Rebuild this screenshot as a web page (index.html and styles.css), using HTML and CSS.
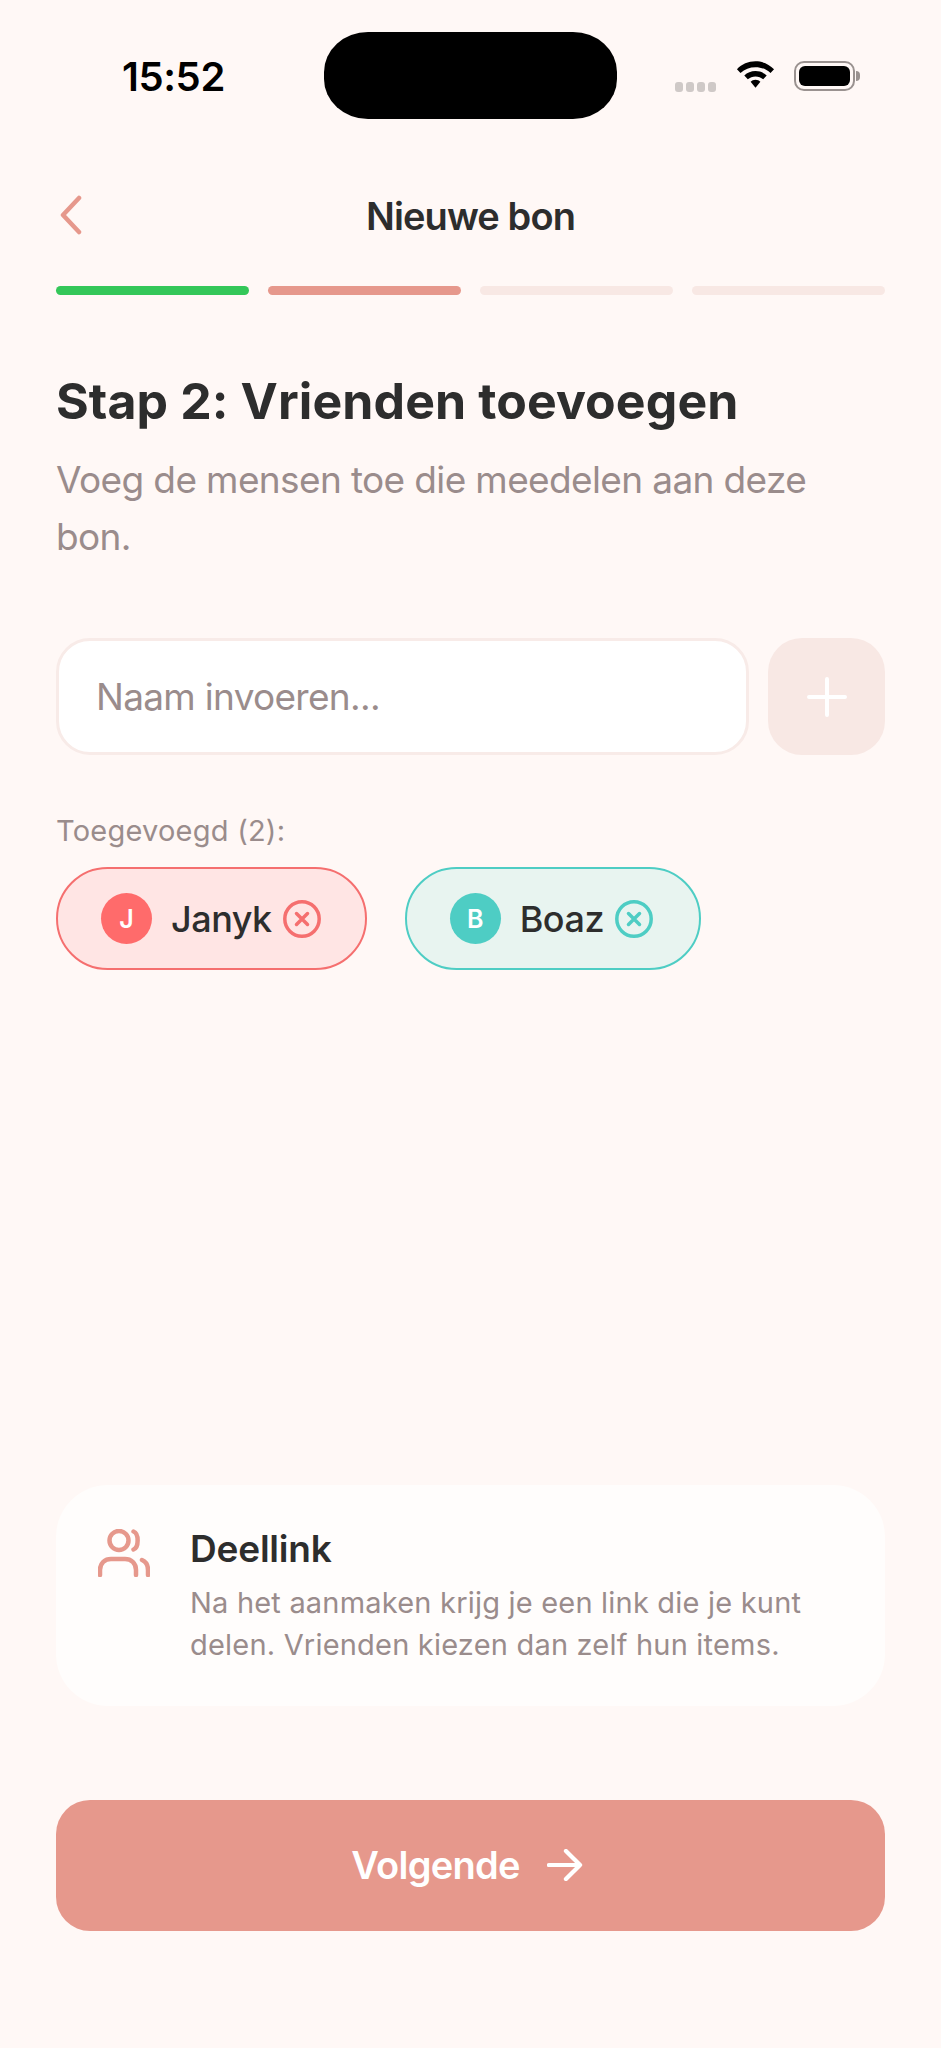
FILE: index.html
```html
<!DOCTYPE html>
<html lang="nl">
<head>
<meta charset="utf-8">
<title>Nieuwe bon</title>
<link rel="stylesheet" href="styles.css">
</head>
<body>
<main class="page">
  <div class="status">
    <span class="time">15:52</span>
    <div class="island"></div>
    <div class="status-icons">
      <div class="dots"><i></i><i></i><i></i><i></i></div>
      <svg class="wifi" viewBox="0 0 40 30"><path d="M20 2C12.5 2 6 5 1 10l3.6 4C9 10 14 8 20 8s11 2 15.4 6l3.600-4C34 5 27.500 2 20 2z"/><path d="M20 12c-4.500 0-8.500 1.700-11.500 4.500l3.600 4C14.200 18.500 17 17.500 20 17.500s5.800 1 7.900 3l3.600-4C28.500 13.700 24.500 12 20 12z"/><path d="M20 21c-2 0-3.800.8-5 2l5 6 5-6c-1.200-1.200-3-2-5-2z"/></svg>
      <div class="battery"><div class="battery-fill"></div></div>
      <div class="battery-cap"></div>
    </div>
  </div>

  <header class="nav">
    <svg class="back" viewBox="0 0 24 40"><path d="M20 3 4 20l16 17"/></svg>
    <h1 class="nav-title">Nieuwe bon</h1>
  </header>

  <div class="progress">
    <span class="bar done"></span>
    <span class="bar active"></span>
    <span class="bar"></span>
    <span class="bar"></span>
  </div>

  <h2 class="heading">Stap 2: Vrienden toevoegen</h2>
  <p class="sub">Voeg de mensen toe die meedelen aan deze bon.</p>

  <div class="add-row">
    <div class="input">Naam invoeren...</div>
    <div class="add-btn">
      <svg viewBox="0 0 40 40"><path d="M20 2v36M2 20h36"/></svg>
    </div>
  </div>

  <p class="label">Toegevoegd (2):</p>
  <div class="chips">
    <div class="chip chip-red">
      <span class="avatar">J</span>
      <span class="name">Janyk</span>
      <svg class="remove" viewBox="0 0 38 38"><circle cx="19" cy="19" r="17.200"/><path d="M13.500 13.500l11 11M24.500 13.500l-11 11"/></svg>
    </div>
    <div class="chip chip-teal">
      <span class="avatar">B</span>
      <span class="name">Boaz</span>
      <svg class="remove" viewBox="0 0 38 38"><circle cx="19" cy="19" r="17.200"/><path d="M13.500 13.500l11 11M24.500 13.500l-11 11"/></svg>
    </div>
  </div>

  <section class="card">
    <svg class="users" viewBox="0 0 52 48"><circle cx="21" cy="11.500" r="9.500"/><path d="M35.500 2.500c5.500 2 5.500 16 0 18"/><path d="M2 46v-5c0-7 5-11 11-11h14c6 0 11 4 11 11v5"/><path d="M44 31c3.500 1.500 6 5 6 10v5"/></svg>
    <div class="card-text">
      <h3 class="card-title">Deellink</h3>
      <p class="card-desc">Na het aanmaken krijg je een link die je kunt delen. Vrienden kiezen dan zelf hun items.</p>
    </div>
  </section>

  <button class="next" type="button">
    <span>Volgende</span>
    <svg viewBox="0 0 38 34"><path d="M2 17h33M20 2l15 15-15 15"/></svg>
  </button>
</main>
</body>
</html>
```
FILE: styles.css
```css
* { box-sizing: border-box; }
html, body { margin: 0; padding: 0; }
body {
  background: #fff8f6;
  font-family: Inter, "Liberation Sans", sans-serif;
  color: #2d2d2d;
}
.page {
  width: 941px;
  height: 2048px;
  padding: 0 56px;
  display: flex;
  flex-direction: column;
  overflow: hidden;
}
.status {
  height: 87px;
  margin: 32px -56px 0;
  display: flex;
  align-items: center;
  position: relative;
}
.time {
  width: 324px;
  padding: 2px 0 0 122px;
  font-size: 40px;
  font-weight: 600;
  color: #000;
  letter-spacing: -0.4px;
}
.island {
  width: 293px;
  height: 87px;
  border-radius: 44px / 40px;
  background: #000;
}
.status-icons {
  display: flex;
  align-items: center;
  margin-left: 58px;
  height: 40px;
}
.dots { display: flex; gap: 3px; margin-top: 22px; margin-right: 20px; }
.dots i { width: 8px; height: 10px; border-radius: 3px; background: #cfc9c7; }
.wifi { width: 39px; height: 30px; fill: #000; margin-right: 19px; margin-top: -4px; }
.battery {
  width: 61px;
  height: 30px;
  border: 2.500px solid #9a9290;
  border-radius: 10px;
  padding: 3px;
}
.battery-fill { width: 100%; height: 100%; background: #000; border-radius: 6px; }
.battery-cap { width: 4px; height: 10px; background: #9a9290; border-radius: 0 4px 4px 0; margin-left: 1px; }

.nav {
  margin-top: 62px;
  height: 70px;
  display: flex;
  align-items: center;
  justify-content: center;
  position: relative;
}
.back {
  position: absolute;
  left: 3px;
  top: 14px;
  width: 24px;
  height: 40px;
  fill: none;
  stroke: #e6988c;
  stroke-width: 4.500;
  stroke-linecap: round;
  stroke-linejoin: round;
}
.nav-title {
  margin: 0;
  font-size: 38px;
  font-weight: 600;
  letter-spacing: -0.9px;
}
.progress {
  margin-top: 35px;
  display: flex;
  gap: 19px;
}
.bar {
  flex: 1;
  height: 9px;
  border-radius: 5px;
  background: #f8e8e4;
}
.bar.done { background: #34c759; }
.bar.active { background: #e6988c; }

.heading {
  margin: 75px 0 0;
  font-size: 50px;
  line-height: 62px;
  font-weight: 700;
  letter-spacing: 0.1px;
}
.sub {
  margin: 19px 0 0;
  width: 800px;
  font-size: 37px;
  line-height: 57px;
  color: #9a8c8c;
  letter-spacing: -0.63px;
}
.add-row {
  margin-top: 73px;
  display: flex;
  gap: 19px;
}
.input {
  flex: 1;
  height: 117px;
  background: #fff;
  border: 3px solid #f8ebe8;
  border-radius: 34px;
  padding-left: 37px;
  display: flex;
  align-items: center;
  font-size: 37px;
  color: #9a8c8c;
  letter-spacing: -0.7px;
}
.add-btn {
  width: 117px;
  height: 117px;
  background: #f8e8e4;
  border-radius: 34px;
  display: flex;
  align-items: center;
  justify-content: center;
}
.add-btn svg {
  width: 40px;
  height: 40px;
  fill: none;
  stroke: #fff;
  stroke-width: 4;
  stroke-linecap: round;
}
.label {
  margin: 58px 0 0;
  font-size: 29px;
  line-height: 36px;
  color: #9a8c8c;
  letter-spacing: 0.23px;
}
.chips {
  margin-top: 18px;
  display: flex;
  gap: 38px;
}
.chip {
  height: 103px;
  border-radius: 52px;
  border: 2.600px solid;
  padding: 0 44px 0 43px;
  display: flex;
  align-items: center;
}
.chip-red { background: #ffe5e4; border-color: #f56f6f; color: #f56f6f; }
.chip-teal { background: #e8f4f0; border-color: #4ecdc4; color: #4ecdc4; padding-right: 46px; }
.avatar {
  width: 51px;
  height: 51px;
  border-radius: 50%;
  display: flex;
  align-items: center;
  justify-content: center;
  font-size: 25px;
  font-weight: 600;
  color: #fff;
}
.chip-red .avatar { background: #ff6b6b; }
.chip-teal .avatar { background: #4ecdc4; }
.name {
  margin-left: 19px;
  font-size: 36px;
  font-weight: 500;
  color: #2d2d2d;
  letter-spacing: -0.5px;
}
.remove {
  width: 38px;
  height: 38px;
  margin-left: 11px;
  fill: none;
  stroke: currentColor;
  stroke-width: 3.500;
  stroke-linecap: round;
}
.card {
  margin-top: auto;
  height: 221px;
  background: #fffdfc;
  border-radius: 52px;
  padding: 44px 42px;
  display: flex;
  gap: 40px;
}
.users {
  flex: none;
  width: 52px;
  height: 48px;
  fill: none;
  stroke: #e6988c;
  stroke-width: 4.500;
  stroke-linecap: round;
}
.card-title {
  margin: -3px 0 0;
  font-size: 37px;
  line-height: 46px;
  font-weight: 600;
  letter-spacing: -0.2px;
}
.card-desc {
  margin: 10px 0 0;
  width: 640px;
  font-size: 29px;
  line-height: 42px;
  color: #9a8c8c;
  letter-spacing: 0.2px;
}
.next {
  margin: 94px 0 117px;
  height: 131px;
  flex: none;
  border: 0;
  border-radius: 34px;
  background: #e6988c;
  color: #fff;
  font-family: inherit;
  font-size: 38px;
  font-weight: 600;
  letter-spacing: -0.7px;
  display: flex;
  align-items: center;
  justify-content: center;
  gap: 27px;
  padding: 0 7px 2px 0;
}
.next svg {
  width: 36px;
  height: 32px;
  fill: none;
  stroke: #fff;
  stroke-width: 4.500;
  stroke-linecap: round;
  stroke-linejoin: round;
}
```
